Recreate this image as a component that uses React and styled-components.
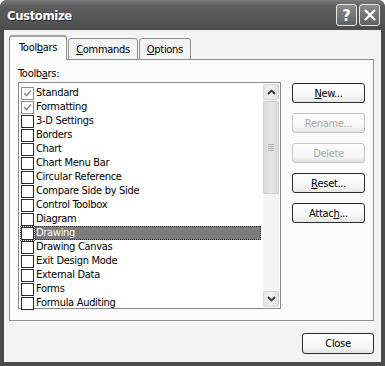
import React from 'react';
import styled, { createGlobalStyle } from 'styled-components';

const toolbars = [
  { name: 'Standard', checked: true },
  { name: 'Formatting', checked: true },
  { name: '3-D Settings' },
  { name: 'Borders' },
  { name: 'Chart' },
  { name: 'Chart Menu Bar' },
  { name: 'Circular Reference' },
  { name: 'Compare Side by Side' },
  { name: 'Control Toolbox' },
  { name: 'Diagram' },
  { name: 'Drawing', selected: true },
  { name: 'Drawing Canvas' },
  { name: 'Exit Design Mode' },
  { name: 'External Data' },
  { name: 'Forms' },
  { name: 'Formula Auditing' },
];

const sideButtons = [
  { label: 'New...', key: 'N' },
  { label: 'Rename...', disabled: true },
  { label: 'Delete', disabled: true },
  { label: 'Reset...', key: 'R' },
  { label: 'Attach...', key: 'h' },
];

const uiFont = '"DejaVu Sans Condensed", "DejaVu Sans", sans-serif';

const GlobalStyle = createGlobalStyle`
  html, body {
    margin: 0;
    padding: 0;
    background: #ffffff;
  }
  body {
    font-family: ${uiFont};
  }
`;

const withAccel = (label, key) => {
  if (!key) return label;
  const i = label.indexOf(key);
  return (
    <>
      {label.slice(0, i)}
      <u>{key}</u>
      {label.slice(i + 1)}
    </>
  );
};

const App = () => (
  <>
    <GlobalStyle />
    <Window>
      <TitleBar>
        <Title>Customize</Title>
        <TitleButtons>
          <CaptionButton>?</CaptionButton>
          <CaptionButton>
            <svg width="14" height="14" viewBox="0 0 14 14">
              <path d="M2 2 L12 12 M12 2 L2 12" stroke="#fff" strokeWidth="2.4" />
            </svg>
          </CaptionButton>
        </TitleButtons>
      </TitleBar>

      <Body>
        <TabRow>
          <Tab active>Tool<u>b</u>ars</Tab>
          <Tab><u>C</u>ommands</Tab>
          <Tab><u>O</u>ptions</Tab>
        </TabRow>

        <Panel>
          <Label>Toolb<u>a</u>rs:</Label>
          <PanelRow>
            <ListBox>
              <Items>
                {toolbars.map(t => (
                  <Item key={t.name}>
                    <CheckBox checked={t.checked} focused={t.selected}>
                      {t.checked && (
                        <svg width="9" height="9" viewBox="0 0 9 9">
                          <path d="M1 4 L3.5 6.5 L8 1.5" fill="none" stroke="#8a8a8a" strokeWidth="1.6" />
                        </svg>
                      )}
                    </CheckBox>
                    <ItemText selected={t.selected}>{t.name}</ItemText>
                  </Item>
                ))}
              </Items>
              <ScrollBar>
                <ArrowButton>
                  <svg width="9" height="6" viewBox="0 0 9 6">
                    <path d="M1 5 L4.5 1.5 L8 5" fill="none" stroke="#3a3a3a" strokeWidth="1.8" />
                  </svg>
                </ArrowButton>
                <Track>
                  <Thumb>
                    <Grip />
                  </Thumb>
                </Track>
                <ArrowButton>
                  <svg width="9" height="6" viewBox="0 0 9 6">
                    <path d="M1 1 L4.5 4.5 L8 1" fill="none" stroke="#3a3a3a" strokeWidth="1.8" />
                  </svg>
                </ArrowButton>
              </ScrollBar>
            </ListBox>

            <ButtonColumn>
              {sideButtons.map(b => (
                <PushButton key={b.label} disabled={b.disabled}>
                  {withAccel(b.label, b.key)}
                </PushButton>
              ))}
            </ButtonColumn>
          </PanelRow>
        </Panel>

        <Footer>
          <PushButton wide>Close</PushButton>
        </Footer>
      </Body>
    </Window>
  </>
);

const Window = styled.div`
  width: 385px;
  height: 366px;
  box-sizing: border-box;
  display: flex;
  flex-direction: column;
  background: #4b4b4b;
  border-radius: 7px 7px 0 0;
  overflow: hidden;
  font-family: ${uiFont};
  font-stretch: condensed;
  font-size: 11px;
  letter-spacing: -0.3px;
  color: #000;
`;

const TitleBar = styled.div`
  height: 30px;
  flex: none;
  display: flex;
  align-items: center;
  justify-content: space-between;
  padding: 0 5px 0 7px;
  background: linear-gradient(#7a7a7a 0%, #5c5c5c 20%, #545454 70%, #4d4d4d 100%);
`;

const Title = styled.div`
  font-weight: bold;
  font-size: 13px;
  color: #ffffff;
  letter-spacing: -0.4px;
  text-shadow: 1px 1px 0 #2a2a2a;
`;

const TitleButtons = styled.div`
  display: flex;
  gap: 2px;
`;

const CaptionButton = styled.div`
  width: 19px;
  height: 20px;
  border: 1px solid #e8e8e8;
  border-radius: 3px;
  background: linear-gradient(#8a8a8a, #606060);
  display: flex;
  align-items: center;
  justify-content: center;
  color: #fff;
  font-family: "DejaVu Sans", sans-serif;
  font-weight: bold;
  font-size: 16px;
  letter-spacing: 0;
`;

const Body = styled.div`
  flex: 1;
  margin: 0 4px 4px;
  background: #f3f3f3;
  display: flex;
  flex-direction: column;
  padding: 6px 7px 0 5px;
`;

const TabRow = styled.div`
  display: flex;
  align-items: flex-end;
  height: 24px;
  position: relative;
  z-index: 1;
  margin-bottom: -1px;
`;

const Tab = styled.div`
  height: ${p => (p.active ? '25px' : '22px')};
  box-sizing: border-box;
  padding: 0 ${p => (p.active ? '9px' : '7px')};
  margin-left: ${p => (p.active ? '0' : '1px')};
  display: flex;
  align-items: center;
  background: ${p => (p.active ? '#fbfbfb' : '#f3f3f3')};
  border: 1px solid #8f8f8f;
  border-bottom: ${p => (p.active ? 'none' : '1px solid #8f8f8f')};
  border-radius: 3px 3px 0 0;
  ${p => p.active && 'border-top: 2px solid #a0a0a0; padding-bottom: 2px;'}
`;

const Panel = styled.div`
  height: 262px;
  box-sizing: border-box;
  background: #fbfbfb;
  border: 1px solid #8f8f8f;
  padding: 6px 8px 0 8px;
`;

const Label = styled.div`
  height: 15px;
  line-height: 15px;
  margin-bottom: 1px;
`;

const PanelRow = styled.div`
  display: flex;
  gap: 11px;
  align-items: flex-start;
`;

const ListBox = styled.div`
  width: 264px;
  height: 227px;
  box-sizing: border-box;
  border: 1px solid #8a8a8a;
  background: #ffffff;
  display: flex;
  padding: 1px 1px 1px 2px;
`;

const Items = styled.div`
  flex: 1;
  display: flex;
  flex-direction: column;
  padding-top: 2px;
`;

const Item = styled.div`
  height: 14px;
  display: flex;
  align-items: center;
  gap: 1px;
`;

const CheckBox = styled.div`
  width: 13px;
  height: 13px;
  box-sizing: border-box;
  border: 1px solid ${p => (p.checked ? '#8a8a8a' : '#2a2a2a')};
  background: #fff;
  display: flex;
  align-items: center;
  justify-content: center;
  flex: none;
  outline: ${p => (p.focused ? '1px dotted #444' : 'none')};
`;

const ItemText = styled.div`
  flex: 1;
  height: 14px;
  line-height: 14px;
  box-sizing: border-box;
  padding-left: 1px;
  margin-right: 2px;
  white-space: nowrap;
  color: ${p => (p.selected ? '#ffffff' : '#000')};
  background: ${p => (p.selected ? '#7c7c7c' : 'transparent')};
  outline: ${p => (p.selected ? '1px dotted #333' : 'none')};
  outline-offset: -1px;
`;

const ScrollBar = styled.div`
  width: 16px;
  display: flex;
  flex-direction: column;
  gap: 1px;
  background: #f4f4f4;
`;

const ArrowButton = styled.div`
  height: 16px;
  flex: none;
  box-sizing: border-box;
  border: 1px solid #d6d6d6;
  border-radius: 2px;
  background: linear-gradient(90deg, #e6e6e6, #efefef 50%, #e2e2e2);
  display: flex;
  align-items: center;
  justify-content: center;
`;

const Track = styled.div`
  flex: 1;
  display: flex;
  flex-direction: column;
`;

const Thumb = styled.div`
  height: 93px;
  box-sizing: border-box;
  border: 1px solid #d0d0d0;
  border-radius: 2px;
  background: linear-gradient(90deg, #dadada, #e6e6e6 50%, #d8d8d8);
  display: flex;
  align-items: center;
  justify-content: center;
`;

const Grip = styled.div`
  width: 6px;
  height: 7px;
  background: repeating-linear-gradient(#b0b0b0 0 1px, transparent 1px 2px);
`;

const ButtonColumn = styled.div`
  display: flex;
  flex-direction: column;
  gap: 10px;
  padding-top: 1px;
`;

const PushButton = styled.div`
  width: ${p => (p.wide ? '72px' : '73px')};
  height: ${p => (p.wide ? '21px' : '20px')};
  box-sizing: border-box;
  border: 1px solid ${p => (p.disabled ? '#c4c4c4' : '#2c2c2c')};
  border-radius: 3px;
  background: linear-gradient(#ffffff, #f6f6f6 70%, #e4e4e4);
  display: flex;
  align-items: center;
  justify-content: center;
  color: ${p => (p.disabled ? '#a8a8a8' : '#000')};
`;

const Footer = styled.div`
  display: flex;
  justify-content: flex-end;
  padding-top: 12px;
`;

export default App;
